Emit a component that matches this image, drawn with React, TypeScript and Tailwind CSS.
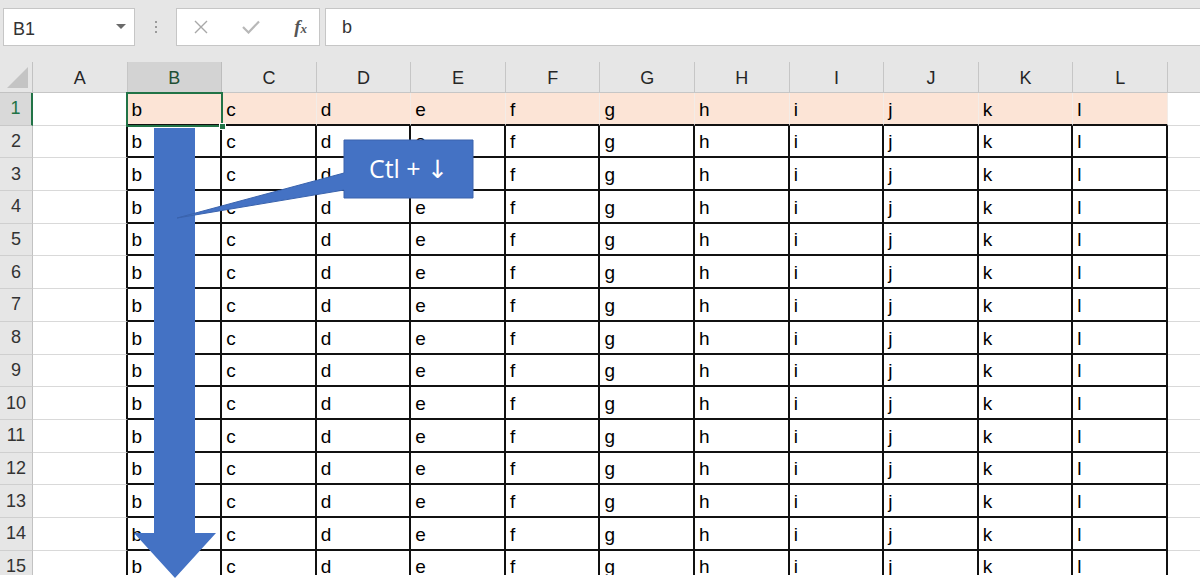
import React from 'react';

const COLS = ['A', 'B', 'C', 'D', 'E', 'F', 'G', 'H', 'I', 'J', 'K', 'L'];
const ROWS = Array.from({ length: 15 }, (_, i) => i + 1);
const FONT = { fontFamily: '"Liberation Sans", Arial, sans-serif' };

function Toolbar() {
  return (
    <div className="h-[62px] bg-[#e6e6e6] flex items-start pt-[8px] pl-[3px] gap-0">
      {/* Name box */}
      <div className="w-[132px] h-[38px] bg-white border border-[#c6c6c6] flex items-center justify-between pl-[9px] pr-[8px]">
        <span className="text-[18px] text-[#333] mt-[5px]">B1</span>
        <svg width="10" height="6" viewBox="0 0 10 6">
          <path d="M0 0 L10 0 L5 5 Z" fill="#6a6a6a" />
        </svg>
      </div>
      {/* Dots */}
      <div className="w-[41px] h-[38px] flex flex-col items-center justify-center gap-[3px]">
        <span className="w-[2px] h-[2px] bg-[#9a9a9a]" />
        <span className="w-[2px] h-[2px] bg-[#9a9a9a]" />
        <span className="w-[2px] h-[2px] bg-[#9a9a9a]" />
      </div>
      {/* Formula buttons */}
      <div className="w-[144px] h-[38px] bg-white border border-[#c6c6c6] flex items-center justify-between pl-[17px] pr-[12px]">
        <svg width="14" height="14" viewBox="0 0 14 14">
          <path d="M1 1 L13 13 M13 1 L1 13" stroke="#a8a8a8" strokeWidth="1.4" />
        </svg>
        <svg width="18" height="14" viewBox="0 0 18 14">
          <path d="M1 7 L6.5 12.5 L17 1.5" stroke="#b8b8b8" strokeWidth="2.2" fill="none" />
        </svg>
        <span className="text-[19px] italic font-bold text-[#555]" style={{ fontFamily: '"Liberation Serif", serif' }}>
          f<span className="text-[13px]">x</span>
        </span>
      </div>
      {/* Formula input */}
      <div className="ml-[5px] flex-1 h-[38px] bg-white border border-[#c6c6c6] border-r-0 flex items-center pl-[16px]">
        <span className="text-[18px] text-[#333] mt-[1px]">b</span>
      </div>
    </div>
  );
}

function HeaderRow() {
  return (
    <>
      <div className="bg-[#e6e6e6] border-r border-b border-[#c2c2c2] relative">
        <svg className="absolute right-[4px] bottom-[4px]" width="21" height="21" viewBox="0 0 21 21">
          <path d="M21 0 L21 21 L0 21 Z" fill="#c4c4c4" />
        </svg>
      </div>
      {COLS.map((c) => (
        <div
          key={c}
          className={
            c === 'B'
              ? 'bg-[#d3d3d3] border-r border-b border-[#bdbdbd] flex items-center justify-center pt-[2px] text-[18px] text-[#1f4f35]'
              : 'bg-[#e6e6e6] border-r border-b border-[#c6c6c6] flex items-center justify-center pt-[2px] text-[18px] text-[#262626]'
          }
        >
          {c}
        </div>
      ))}
      <div className="bg-[#e6e6e6] border-b border-[#c6c6c6]" />
    </>
  );
}

function Row({ r }: { r: number }) {
  const first = r === 1;
  return (
    <>
      <div
        className={
          first
            ? 'bg-[#d9d9d9] border-b border-[#c8c8c8] border-r-2 border-r-[#217346] flex items-center justify-center text-[18px] text-[#217346]'
            : 'bg-[#e6e6e6] border-b border-[#cfcfcf] border-r border-r-[#c2c2c2] flex items-center justify-center text-[18px] text-[#333]'
        }
      >
        {r}
      </div>
      {/* Column A */}
      <div
        className={
          first
            ? 'bg-white border-b border-[#d9d9d9]'
            : 'bg-white border-b border-[#d9d9d9] border-r-2 border-r-[#111]'
        }
      />
      {COLS.slice(1).map((c) => (
        <div
          key={c}
          className={
            first
              ? 'bg-[#fce4d6] border-r border-r-[#f3ece7] border-b-2 border-b-[#111] flex items-end pl-[4px] pb-[5px] text-[19px] text-black leading-none'
              : 'bg-white border-r-2 border-b-2 border-[#111] flex items-end pl-[4px] pb-[5px] text-[19px] text-black leading-none'
          }
        >
          {c.toLowerCase()}
        </div>
      ))}
      <div className="bg-white border-b border-[#d9d9d9]" />
    </>
  );
}

export default function App() {
  return (
    <div className="w-[1200px] h-[580px] bg-white overflow-hidden relative" style={FONT}>
      <Toolbar />
      <div className="h-[513px] overflow-hidden relative">
        <div className="grid grid-cols-[33px_repeat(12,94.58px)_1fr] grid-rows-[31px_repeat(15,32.7px)]">
          <HeaderRow />
          {ROWS.map((r) => (
            <Row key={r} r={r} />
          ))}
        </div>
        {/* Active cell selection */}
        <div className="absolute left-[126px] top-[30px] w-[97px] h-[35px] border-2 border-[#217346]">
          <div className="absolute -right-[5px] -bottom-[5px] w-[7px] h-[7px] bg-[#217346] border border-white" />
        </div>
      </div>

      {/* Annotation: arrow + callout */}
      <svg className="absolute left-0 top-0 pointer-events-none" width="1200" height="580" viewBox="0 0 1200 580">
        <polygon
          points="154,128 195,128 195,533 216,533 175,578 134,533 154,533"
          fill="#4472c4"
        />
        <polygon
          points="344,140 473,140 473,198 344,198 344,190 177,218 344,173"
          fill="#4472c4"
          stroke="#3a63ad"
          strokeWidth="1"
        />
      </svg>
      <div className="absolute left-[344px] top-[140px] w-[129px] h-[58px] flex items-center justify-center text-white text-[25px] pointer-events-none" style={{ fontFamily: '"Open Sans", "DejaVu Sans", sans-serif' }}>
        Ctl + ↓
      </div>
    </div>
  );
}
